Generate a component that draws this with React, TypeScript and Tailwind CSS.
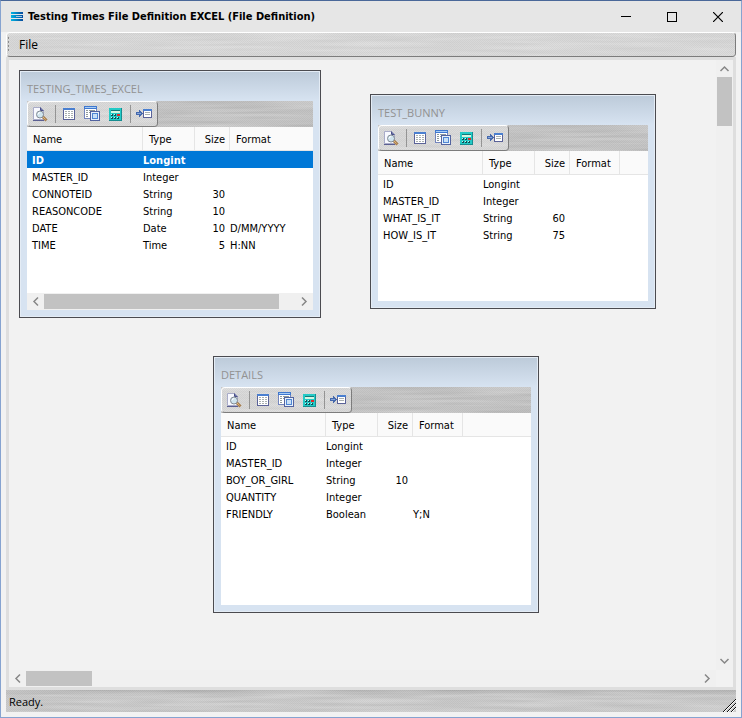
import React from 'react';

type Row = { name: string; type: string; size?: string; format?: string };
type FileTable = {
  title: string;
  place: string;
  nameCol: string;
  rows: Row[];
  selected?: number;
  scroll?: boolean;
};

const tables: FileTable[] = [
  {
    title: 'TESTING_TIMES_EXCEL',
    place: 'left-[10px] top-[10px] w-[302px] h-[248px]',
    nameCol: 'w-[116px]',
    selected: 0,
    scroll: true,
    rows: [
      { name: 'ID', type: 'Longint' },
      { name: 'MASTER_ID', type: 'Integer' },
      { name: 'CONNOTEID', type: 'String', size: '30' },
      { name: 'REASONCODE', type: 'String', size: '10' },
      { name: 'DATE', type: 'Date', size: '10', format: 'D/MM/YYYY' },
      { name: 'TIME', type: 'Time', size: '5', format: 'H:NN' },
    ],
  },
  {
    title: 'TEST_BUNNY',
    place: 'left-[361px] top-[34px] w-[286px] h-[215px]',
    nameCol: 'w-[105px]',
    rows: [
      { name: 'ID', type: 'Longint' },
      { name: 'MASTER_ID', type: 'Integer' },
      { name: 'WHAT_IS_IT', type: 'String', size: '60' },
      { name: 'HOW_IS_IT', type: 'String', size: '75' },
    ],
  },
  {
    title: 'DETAILS',
    place: 'left-[204px] top-[296px] w-[326px] h-[257px]',
    nameCol: 'w-[105px]',
    rows: [
      { name: 'ID', type: 'Longint' },
      { name: 'MASTER_ID', type: 'Integer' },
      { name: 'BOY_OR_GIRL', type: 'String', size: '10' },
      { name: 'QUANTITY', type: 'Integer' },
      { name: 'FRIENDLY', type: 'Boolean', format: 'Y;N' },
    ],
  },
];

/* Brushed-metal grain laid behind a bar. */
function Brushed({ id }: { id: string }) {
  return (
    <svg className="pointer-events-none absolute inset-0 h-full w-full" aria-hidden="true">
      <filter id={id} x="0" y="0" width="100%" height="100%">
        <feTurbulence type="fractalNoise" baseFrequency="0.012 0.3" numOctaves="2" seed="4" />
        <feColorMatrix values="0 0 0 0 1  0 0 0 0 1  0 0 0 0 1  0.45 0 0 0 -0.05" />
      </filter>
      <pattern id={`${id}-dots`} width="2" height="2" patternUnits="userSpaceOnUse">
        <rect width="1" height="1" fill="#000" fillOpacity="0.04" />
        <rect x="1" y="1" width="1" height="1" fill="#000" fillOpacity="0.04" />
      </pattern>
      <rect width="100%" height="100%" filter={`url(#${id})`} />
      <rect width="100%" height="100%" fill={`url(#${id}-dots)`} />
    </svg>
  );
}

function Chevron({ dir }: { dir: 'up' | 'down' | 'left' | 'right' }) {
  const d = {
    up: 'M4.5 11 8.5 7 12.5 11',
    down: 'M4.5 6 8.5 10 12.5 6',
    left: 'M11 4.5 7 8.5 11 12.5',
    right: 'M6 4.5 10 8.5 6 12.5',
  }[dir];
  return (
    <svg width="17" height="17" viewBox="0 0 17 17" fill="none" stroke="#868686" strokeWidth="1.5" aria-hidden="true">
      <path d={d} />
    </svg>
  );
}

function PreviewIcon() {
  return (
    <svg width="16" height="16" viewBox="0 0 16 16" aria-hidden="true">
      <path d="M1.5 1.5h7l3 3v9h-10z" fill="#f8f9ff" stroke="#a9acc9" />
      <path d="M8.5 1.5v3h3" fill="#6a72a8" stroke="#4a5088" />
      <path d="M1 14.5h11" stroke="#5b5f92" />
      <path d="M10.5 10.5 14.5 14.5" stroke="#a87f50" strokeWidth="3" />
      <path d="M10.5 10.5 13.5 13.5" stroke="#e0b877" />
      <circle cx="8" cy="8.5" r="3.5" fill="#cfe4ee" stroke="#838b94" />
      <path d="M6.2 8.3a2 2 0 0 1 2-1.8" stroke="#fff" fill="none" />
    </svg>
  );
}

function TableIcon() {
  return (
    <svg width="16" height="16" viewBox="0 0 16 16" shapeRendering="crispEdges" aria-hidden="true">
      <rect x="2" y="2" width="12" height="12" fill="#5a6298" />
      <rect x="2" y="2" width="12" height="2" fill="#4a7fd0" />
      <rect x="3" y="4" width="10" height="9" fill="#fff" />
      <path d="M4 5.5h2M7 5.5h2M10 5.5h2M4 7.5h2M7 7.5h2M10 7.5h2M4 9.5h2M7 9.5h2M10 9.5h2M4 11.5h2M7 11.5h2M10 11.5h2" stroke="#a9b0b0" />
    </svg>
  );
}

function FormIcon() {
  return (
    <svg width="16" height="16" viewBox="0 0 16 16" shapeRendering="crispEdges" aria-hidden="true">
      <rect x="0" y="0" width="13" height="13" fill="#7385bd" />
      <rect x="0" y="0" width="13" height="3" fill="#3f78cf" />
      <path d="M1 1.5h11" stroke="#a9cdf4" />
      <rect x="1" y="3" width="11" height="9" fill="#fff" />
      <path d="M2 4.5h2M5 4.5h6M2 6.5h2M5 6.5h1M2 8.5h2M2 10.5h2" stroke="#8f9a9c" />
      <rect x="6" y="5" width="10" height="10" fill="#52639f" />
      <rect x="7" y="6" width="8" height="8" fill="#e8f1fb" />
      <rect x="8" y="7" width="6" height="6" fill="#4f86d4" />
      <rect x="9" y="8" width="4" height="4" fill="#c8e0f6" />
    </svg>
  );
}

function CalcIcon() {
  return (
    <svg width="16" height="16" viewBox="0 0 16 16" shapeRendering="crispEdges" aria-hidden="true">
      <rect x="2" y="2" width="13" height="13" rx="1" fill="#168d90" />
      <rect x="2" y="2" width="12" height="12" rx="1" fill="#24cac6" />
      <rect x="4" y="4" width="9" height="3" fill="#d6f5e2" />
      <path d="M4 4.5h9" stroke="#157878" />
      <path d="M4 9h2M7 9h2M4 12h2M7 12h2M10 12h2" stroke="#0f4f58" strokeWidth="2" />
      <path d="M4 8.5h1M7 8.5h1M4 11.5h1M7 11.5h1M10 11.5h1" stroke="#c5f3ee" />
      <rect x="10" y="8" width="3" height="2" fill="#e02828" />
    </svg>
  );
}

function InsertIcon() {
  return (
    <svg width="16" height="16" viewBox="0 0 16 16" shapeRendering="crispEdges" aria-hidden="true">
      <path d="M0 6h3V4h1v1h1v1h1v1h1v1H6v1H5v1H4v1H3V9H0z" fill="#4468ad" />
      <path d="M1 7.5h4" stroke="#86a6da" />
      <rect x="7" y="3" width="9" height="9" fill="#5a6298" />
      <rect x="7" y="3" width="9" height="2" fill="#4a7fd0" />
      <rect x="8" y="5" width="7" height="6" fill="#fff" />
      <path d="M9 6.5h5M9 8.5h5" stroke="#a9b0b0" />
    </svg>
  );
}

function ToolButton({ label, children }: { label: string; children: React.ReactNode }) {
  return (
    <button type="button" aria-label={label} className="grid h-6 w-4 place-items-center">
      {children}
    </button>
  );
}

function Toolbar({ id }: { id: string }) {
  return (
    <div className="relative h-[26px] shrink-0 bg-[#bababa]">
      <Brushed id={`${id}-band`} />
      <div className="relative flex h-[26px] w-[131px] items-center rounded-sm border border-t-white border-r-[#7c7c7c] border-b-[#7c7c7c] border-l-white bg-[#d4d4d4] pl-1">
        <Brushed id={`${id}-tools`} />
        <div className="relative flex items-center">
          <ToolButton label="Preview"><PreviewIcon /></ToolButton>
          <span className="mr-[5px] ml-[7px] h-[18px] w-px bg-[#949494]" />
          <div className="flex gap-[7px]">
            <ToolButton label="Table"><TableIcon /></ToolButton>
            <ToolButton label="Form"><FormIcon /></ToolButton>
            <ToolButton label="Calculated field"><CalcIcon /></ToolButton>
          </div>
          <span className="mr-[5px] ml-[7px] h-[18px] w-px bg-[#949494]" />
          <ToolButton label="Insert field"><InsertIcon /></ToolButton>
        </div>
      </div>
    </div>
  );
}

function DefinitionWindow({ table, id }: { table: FileTable; id: string }) {
  const head = 'h-6 border-r border-b border-[#e5e5e5] p-0 pt-0.5 font-normal';
  const cell = 'p-0 pt-0.5';
  return (
    <section className={`absolute flex flex-col border border-[#4b4b50] bg-[#d7e3f1] bg-[linear-gradient(#bccad9,#d7e3f1_30px)] px-[7px] pb-[7px] shadow-[inset_0_0_0_1px_#e4ecf5] ${table.place}`}>
      <h2 className="flex h-[30px] shrink-0 items-end pb-1 font-['Open_Sans',sans-serif] text-[11px] leading-4 text-[#929292]">
        {table.title}
      </h2>
      <Toolbar id={id} />
      <div className="min-h-0 flex-1 overflow-hidden bg-white">
        <table className="w-full table-fixed border-separate border-spacing-0 text-left leading-4">
          <colgroup>
            <col className={table.nameCol} />
            <col className="w-[52px]" />
            <col className="w-[35px]" />
            <col className={table.scroll ? '' : 'w-[50px]'} />
            {!table.scroll && <col />}
          </colgroup>
          <thead className="bg-[#fafafa]">
            <tr>
              <th className={`${head} pl-1.5`}>Name</th>
              <th className={`${head} pl-1.5`}>Type</th>
              <th className={`${head} pr-1 text-right`}>Size</th>
              <th className={table.scroll ? 'h-6 border-b border-[#e5e5e5] p-0 pt-0.5 pl-1.5 font-normal' : `${head} pl-1.5`}>Format</th>
              {!table.scroll && <th className="border-b border-[#e5e5e5] p-0" />}
            </tr>
          </thead>
          <tbody className="leading-[15px]">
            {table.rows.map((row, i) => (
              <tr key={row.name} className={i === table.selected ? 'bg-[#0078d7] font-bold text-white' : ''}>
                <td className={`${cell} h-[17px] pl-[5px]`}>{row.name}</td>
                <td className={cell}>{row.type}</td>
                <td className={`${cell} pr-[5px] text-right`}>{row.size}</td>
                <td className={`${cell} whitespace-nowrap`}>{row.format}</td>
                {!table.scroll && <td className="p-0" />}
              </tr>
            ))}
          </tbody>
        </table>
      </div>
      {table.scroll && (
        <div className="flex h-[17px] shrink-0 items-center bg-[#f0f0f0]">
          <button type="button" aria-label="Scroll left"><Chevron dir="left" /></button>
          <div className="flex-1"><div className="h-[15px] w-[235px] bg-[#c2c2c2]" /></div>
          <button type="button" aria-label="Scroll right"><Chevron dir="right" /></button>
        </div>
      )}
    </section>
  );
}

export default function App() {
  return (
    <div className="flex h-screen flex-col border border-[#86a3d0] border-t-[#4a6899] bg-[#f2f2f2] font-['DejaVu_Sans_Condensed','DejaVu_Sans',sans-serif] text-[11px] leading-[17px] text-black">
      <header className="flex h-[31px] shrink-0 items-center bg-[#e6e6e6] pl-[10px]">
        <svg width="12" height="9" viewBox="0 0 12 9" shapeRendering="crispEdges" aria-hidden="true">
          <defs>
            <linearGradient id="logo" gradientUnits="userSpaceOnUse" x1="0" y1="0" x2="12" y2="0"><stop stopColor="#00b4e4" /><stop offset="1" stopColor="#084a9c" /></linearGradient>
          </defs>
          <path d="M0 0h11l1 1v1H0zM0 3h12v3H0zM0 7h12v1l-1 1H0z" fill="url(#logo)" />
          <path d="M5 4.5h6" stroke="#9cc8e6" />
        </svg>
        <h1 className="ml-[5px] flex-1 font-bold">Testing Times File Definition EXCEL (File Definition)</h1>
        <button type="button" aria-label="Minimize" className="grid h-[31px] w-[46px] place-items-center">
          <svg width="10" height="10" viewBox="0 0 10 10" stroke="#000" aria-hidden="true"><path d="M0 4.5h10" /></svg>
        </button>
        <button type="button" aria-label="Maximize" className="grid h-[31px] w-[46px] place-items-center">
          <svg width="10" height="10" viewBox="0 0 10 10" fill="none" stroke="#000" aria-hidden="true"><rect x=".5" y=".5" width="9" height="9" /></svg>
        </button>
        <button type="button" aria-label="Close" className="grid h-[31px] w-[46px] place-items-center">
          <svg width="10" height="10" viewBox="0 0 10 10" stroke="#000" strokeWidth="1.2" aria-hidden="true"><path d="M0 0l10 10M10 0L0 10" /></svg>
        </button>
      </header>
      <div className="flex min-h-0 flex-1 flex-col px-[5px] pb-[5px]">
        <nav className="relative flex h-[25px] shrink-0 items-center rounded-sm border border-t-white border-r-[#7c7c7c] border-b-[#7c7c7c] border-l-white bg-[#d2d2d2]">
          <Brushed id="menu" />
          <svg width="2" height="15" viewBox="0 0 2 15" className="relative ml-px" aria-hidden="true">
            <path d="M.5 0v15" stroke="#8c8c8c" strokeDasharray="2 2" />
          </svg>
          <button type="button" className="relative ml-[9px] font-['Open_Sans',sans-serif] text-xs">File</button>
        </nav>
        <main className="flex min-h-0 flex-1 flex-col border-[3px] border-[#dedede]">
          <div className="flex min-h-0 flex-1">
            <div className="relative min-w-0 flex-1 overflow-hidden">
              {tables.map((t, i) => (
                <DefinitionWindow key={t.title} table={t} id={`w${i}`} />
              ))}
            </div>
            <div className="flex w-[17px] shrink-0 flex-col items-center bg-[#f0f0f0]">
              <button type="button" aria-label="Scroll up"><Chevron dir="up" /></button>
              <div className="flex-1"><div className="h-[49px] w-[15px] bg-[#c2c2c2]" /></div>
              <button type="button" aria-label="Scroll down"><Chevron dir="down" /></button>
            </div>
          </div>
          <div className="mr-[17px] flex h-[17px] shrink-0 items-center bg-[#f0f0f0]">
            <button type="button" aria-label="Scroll left"><Chevron dir="left" /></button>
            <div className="flex-1"><div className="h-[15px] w-[66px] bg-[#c2c2c2]" /></div>
            <button type="button" aria-label="Scroll right"><Chevron dir="right" /></button>
          </div>
        </main>
        <footer className="relative flex h-[22px] shrink-0 items-center bg-[#c0c0c0] bg-[linear-gradient(#acacac,#c2c2c2_6px)] pl-[3px]">
          <Brushed id="status" />
          <p className="relative flex-1 font-['Open_Sans',sans-serif] text-[11px]">Ready.</p>
          <svg width="13" height="13" viewBox="0 0 13 13" className="relative self-end" aria-hidden="true">
            <path d="M1 13 13 1M5 13l8-8M9 13l4-4" stroke="#fff" />
            <path d="M0 13 13 0M4 13l9-9M8 13l5-5" stroke="#111" />
          </svg>
        </footer>
      </div>
    </div>
  );
}
